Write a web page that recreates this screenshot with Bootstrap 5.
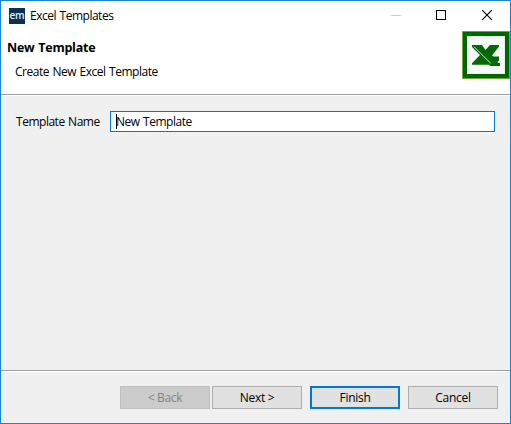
<!DOCTYPE html>
<html lang="en">
<head>
<meta charset="utf-8">
<title>Excel Templates</title>
<link href="https://cdn.jsdelivr.net/npm/bootstrap@5.3.0/dist/css/bootstrap.min.css" rel="stylesheet">
<style>
body{font:12px/16px "Open Sans","Noto Sans",sans-serif;color:#000;letter-spacing:-.48px;word-spacing:.8px;overflow:hidden}
.dialog{width:511px;height:424px;border:1px solid #1883d7;background:#f0f0f0}
.titlebar{height:30px;padding-left:8px}
.em-logo{width:16px;height:16px;margin-right:5px;margin-top:-1px;background:#0a3055;color:#e4ecf2;font-size:10px;font-weight:600;line-height:15px;letter-spacing:-.2px}
.caption-btns{width:138px}
.caption-btns svg{width:46px;height:30px;margin-top:-2px}
.banner{height:63px}
.banner-text{padding:9px 0 0 6px}
.banner-text h1{font-size:12.5px;line-height:16px;font-weight:700;letter-spacing:-.25px}
.banner-text p{padding:8px 0 0 8px}
.rule{height:2px;border-top:1px solid #a0a0a0;background:#fff}
.form-area{padding:15px 15px 0}
.form-area label{width:94px}
.form-area .form-control{height:21px;padding:0 5px;border:1px solid #0078d7;font:inherit;letter-spacing:inherit;word-spacing:inherit;color:#000;line-height:19px}
.caret-bar{width:1px;height:15px;background:#000;left:6px;top:3px}
.footer{height:51px;padding:0 12px 1px}
.footer .btn{width:90px;height:23px;padding:0;font:inherit;line-height:21px;letter-spacing:-.3px;color:#000;background:#e1e1e1;border:1px solid #adadad}
.footer .btn:disabled{color:#838383;background:#ccc;border-color:#bfbfbf;opacity:1}
.footer .btn.default-btn{border:2px solid #0078d7;line-height:19px}
.gap-sm{margin-left:2px}.gap-lg{margin-left:8px}
</style>
<script src="https://cdn.jsdelivr.net/npm/bootstrap@5.3.0/dist/js/bootstrap.bundle.min.js"></script>
</head>
<body>
<div class="dialog d-flex flex-column">
  <header class="titlebar bg-white d-flex align-items-center">
    <span class="em-logo d-flex justify-content-center">em</span>
    <span>Excel Templates</span>
    <div class="caption-btns d-flex ms-auto">
      <svg viewBox="0 0 46 30"><path d="M19 15.5h10" stroke="#ccc" fill="none"/></svg>
      <svg viewBox="0 0 46 30"><rect x="18.5" y="10.5" width="9" height="9" stroke="#000" fill="none"/></svg>
      <svg viewBox="0 0 46 30"><path d="M18.2 10.2l9.6 9.6M27.8 10.2l-9.6 9.6" stroke="#000" stroke-width="1.1" fill="none"/></svg>
    </div>
  </header>
  <section class="banner bg-white d-flex justify-content-between">
    <div class="banner-text">
      <h1 class="m-0">New Template</h1>
      <p class="m-0">Create New Excel Template</p>
    </div>
    <svg width="48" height="48" viewBox="0 0 48 48"><rect width="48" height="48" fill="#72a63c"/><rect x="1" y="1" width="46" height="46" fill="#006600"/><rect x="5" y="5" width="38" height="38" fill="#d5ead9"/><rect x="5.6" y="5.6" width="36.8" height="36.8" fill="#f5faf8"/><path d="M10 14H20l3.500 5L28 14h9v1.500L30 24.500l1.500 1H37V30h-1.200v2H38v3h-9.500l-1.500-1.300H10v-1.500L18 24 10 16z" fill="#056805"/><path d="M11.800 15.500l17 17" stroke="#d5ecd5" stroke-width=".9"/></svg>
  </section>
  <div class="rule"></div>
  <main class="form-area flex-grow-1">
    <div class="d-flex align-items-center">
      <label for="tname">Template Name</label>
      <div class="flex-grow-1 position-relative">
        <input id="tname" class="form-control rounded-0 shadow-none" type="text" value="New Template">
        <span class="caret-bar position-absolute"></span>
      </div>
    </div>
  </main>
  <div class="rule"></div>
  <footer class="footer d-flex justify-content-end align-items-center">
    <button class="btn rounded-0" disabled>&lt; Back</button>
    <button class="btn rounded-0 gap-sm">Next &gt;</button>
    <button class="btn rounded-0 gap-lg default-btn">Finish</button>
    <button class="btn rounded-0 gap-lg">Cancel</button>
  </footer>
</div>
</body>
</html>
